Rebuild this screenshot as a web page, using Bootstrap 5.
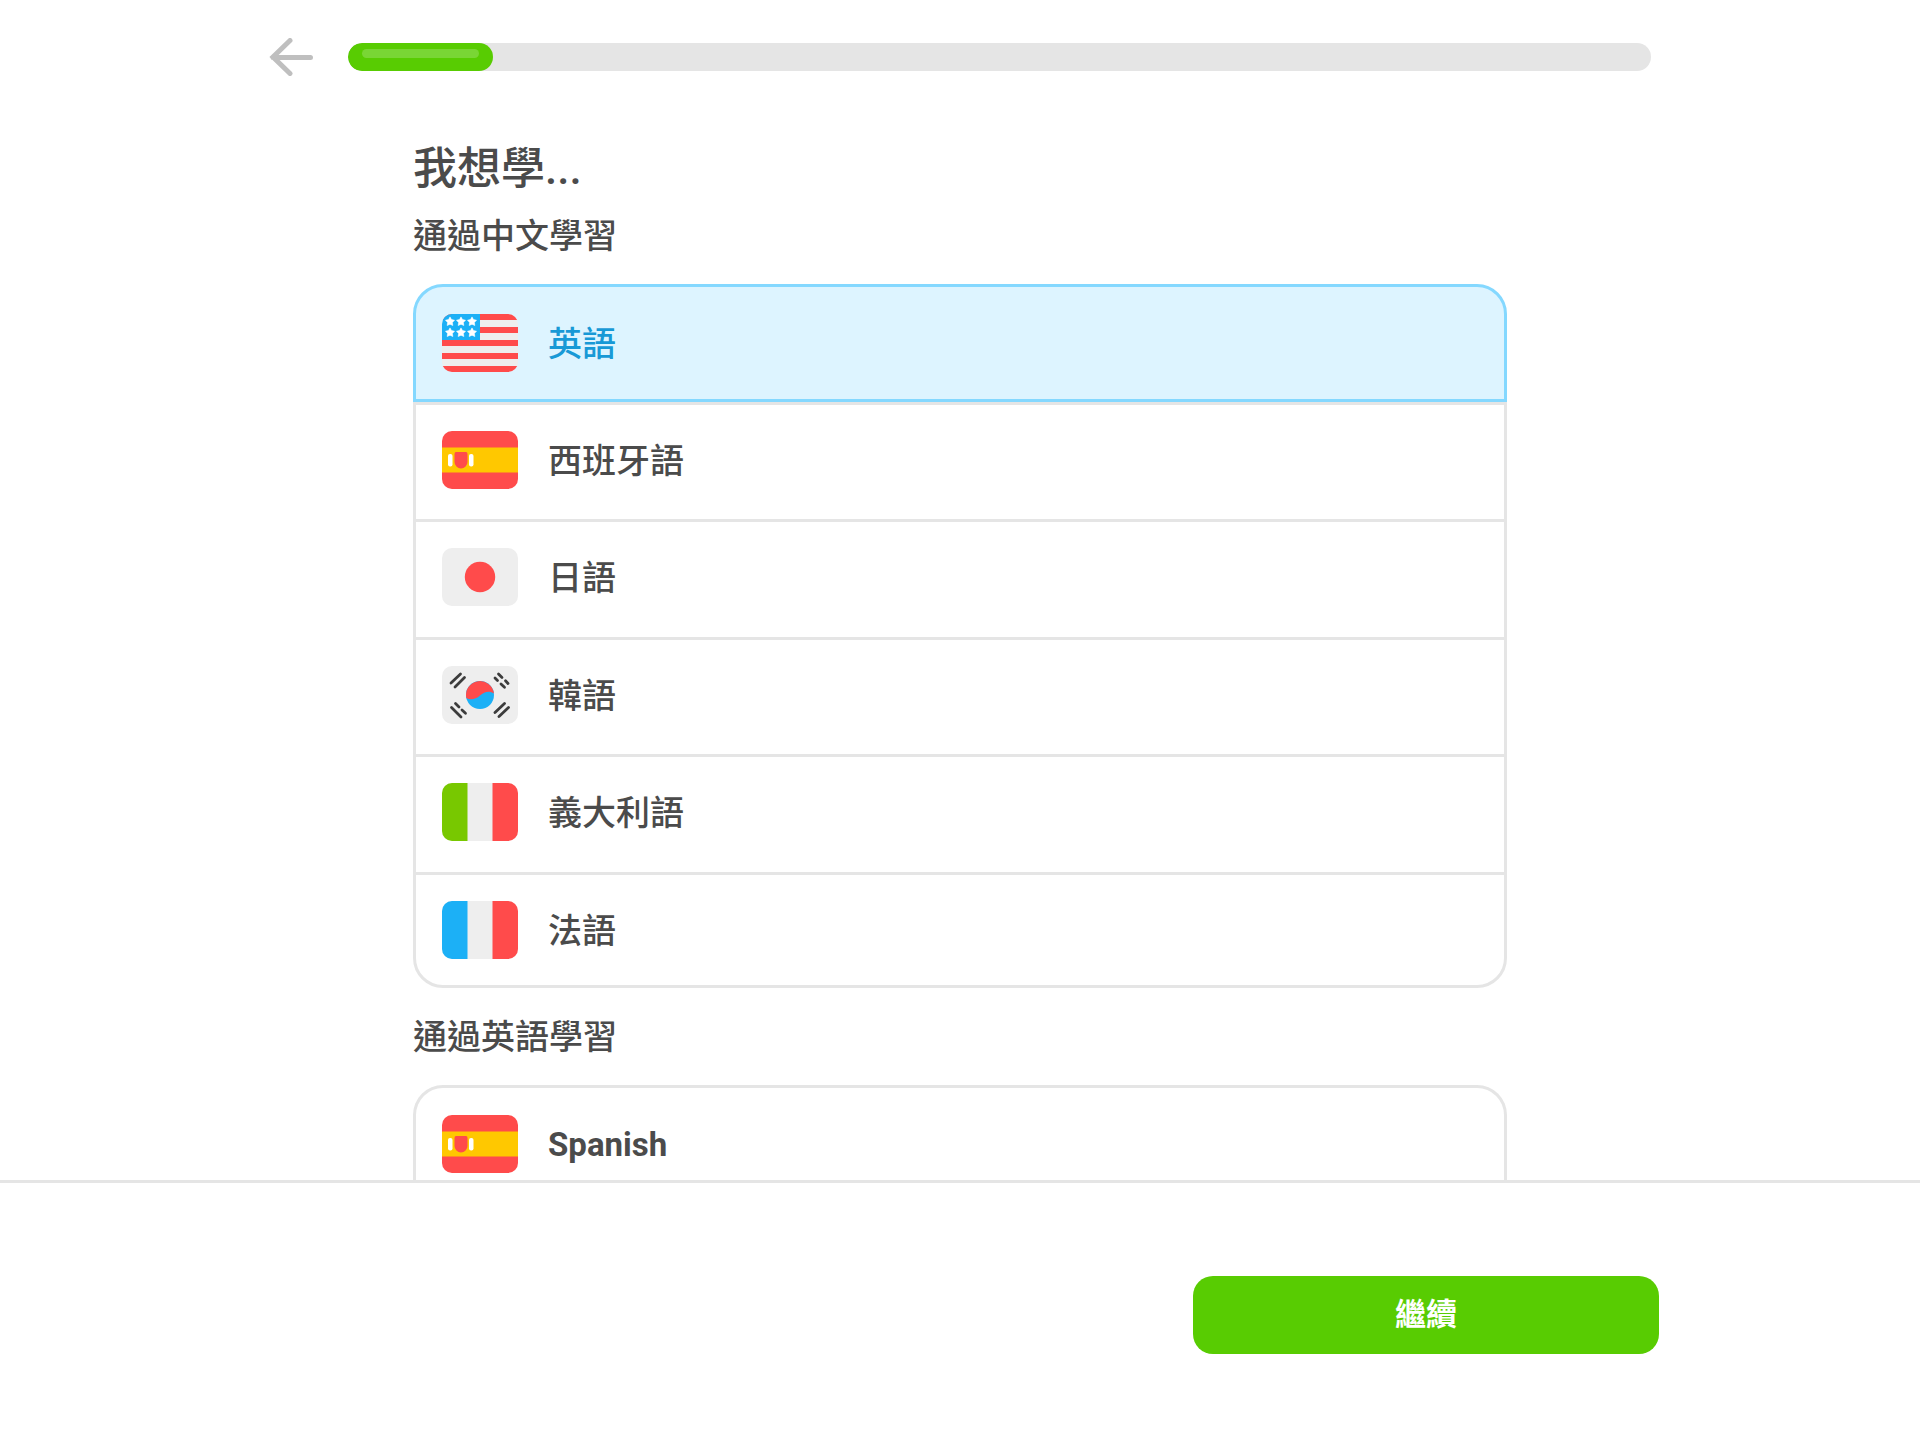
<!DOCTYPE html>
<html lang="zh-Hant">
<head>
<meta charset="utf-8">
<meta name="viewport" content="width=device-width, initial-scale=1">
<title>我想學...</title>
<link href="https://cdn.jsdelivr.net/npm/bootstrap@5.3.0/dist/css/bootstrap.min.css" rel="stylesheet">
<style>
  :root { --line: #e5e5e5; --ink: #4b4b4b; --green: #58cc02; }
  body { font-family: Roboto, "Noto Sans CJK TC", sans-serif; color: var(--ink); background: #fff; }
  .top-wrap { max-width: 1382px; padding-top: 38px; gap: 34px; }
  .back-link { line-height: 0; color: #bfbfbf; }
  .lesson-progress { height: 28px; border-radius: 14px; background: var(--line); }
  .lesson-progress .progress-bar { background: var(--green); border-radius: 14px; padding: 6px 14px 13px; }
  .shine { height: 9px; border-radius: 5px; background: #79d635; }
  .course-scroll { min-height: 0; overflow-y: auto; scrollbar-width: none; }
  .course-scroll::-webkit-scrollbar { display: none; }
  .course-wrap { max-width: 1094px; padding-top: 63px; }
  .page-title { font-size: 44px; line-height: 60px; font-weight: 500; margin-bottom: 15px; }
  .group-title { font-size: 34px; line-height: 44px; font-weight: 500; margin-bottom: 26px; }
  .course-list { margin-bottom: 27px; }
  .course-row { height: 117px; padding: 26px; gap: 30px; border: 3px solid var(--line); border-bottom: 0; font-size: 34px; font-weight: 500; cursor: pointer; }
  .course-row svg { width: 76px; height: 58px; flex: none; border-radius: 10px; }
  .course-name { line-height: 60px; }
  .latin-name { font-size: 33px; font-weight: 700; }
  .course-list li:nth-child(odd) .course-row { height: 118px; }
  .course-list li:first-child .course-row { padding-top: 27px; border-radius: 30px 30px 0 0; }
  .course-list li:nth-child(n+2):last-child .course-row { height: 116px; border-bottom: 3px solid var(--line); border-radius: 0 0 30px 30px; }
  .btn-check:checked + .course-row { background: #ddf4ff; border: 3px solid #84d8ff; color: #1899d6; }
  .btn-check:focus-visible + .course-row { outline: 3px solid #1cb0f6; }
  .foot-bar { border-top: 3px solid var(--line); padding: 93px 0 86px; }
  .foot-wrap { max-width: 1398px; }
  .btn-next { width: 466px; height: 78px; border-radius: 20px; background: var(--green); color: #fff; font-size: 31px; font-weight: 700; }
  .btn-next:hover { background: #61e002; color: #fff; }
</style>
<script src="https://cdn.jsdelivr.net/npm/bootstrap@5.3.0/dist/js/bootstrap.bundle.min.js"></script>
</head>
<body class="vh-100 d-flex flex-column overflow-hidden">

<svg class="d-none" aria-hidden="true">
  <defs>
    <path id="star" d="M0-4.6 1.5-1.9 4.5-1.3 2.4.9 2.8 4 0 2.7-2.8 4-2.4.9-4.5-1.3-1.5-1.9Z" fill="#fff" stroke="#fff" stroke-width=".6" stroke-linejoin="round"/>
    <symbol id="flag-us" viewBox="0 0 76 58">
      <path fill="#eee" d="M0 0h76v58H0z"/>
      <path fill="#ff4b4b" d="M0 0h76v6H0zM0 13h76v6H0zM0 26h76v6H0zM0 39h76v6H0zM0 52h76v6H0z"/>
      <path fill="#1cb0f6" d="M0 0h38v26H0z"/>
      <use href="#star" x="8" y="7.500"/><use href="#star" x="19" y="7.500"/><use href="#star" x="30" y="7.500"/>
      <use href="#star" x="8" y="18.500"/><use href="#star" x="19" y="18.500"/><use href="#star" x="30" y="18.500"/>
    </symbol>
    <symbol id="flag-es" viewBox="0 0 76 58">
      <path fill="#ff4b4b" d="M0 0h76v58H0z"/>
      <path fill="#ffc800" d="M0 16.500h76v25H0z"/>
      <rect x="6" y="23" width="4.500" height="12.500" rx="2" fill="#fff"/>
      <rect x="27" y="23" width="4.500" height="12.500" rx="2" fill="#fff"/>
      <path fill="#ff4b4b" d="M14 21h10q1.500 0 1.500 2v8a6.500 6.500 0 0 1-13 0v-8q0-2 1.500-2z"/>
    </symbol>
    <symbol id="flag-jp" viewBox="0 0 76 58">
      <rect width="76" height="58" fill="#eee"/>
      <circle cx="38" cy="29" r="15.200" fill="#ff4b4b"/>
    </symbol>
    <symbol id="flag-kr" viewBox="0 0 76 58">
      <rect width="76" height="58" fill="#eee"/>
      <circle cx="38" cy="29" r="14" fill="#1cb0f6"/>
      <path fill="#ff4b4b" d="M24.306 31.911C28.500 34.500 33.500 33.500 38 29.500S47.500 24.500 51.923 27.537A14 14 0 1 0 24.306 31.911Z"/>
      <g stroke="#3c3c3c" stroke-width="2.800" stroke-linecap="round">
        <path d="M9 17 18.500 8M13 21 22.500 11.500"/>
        <path d="M53 46.500 62.500 37.500M57 50.500 66.500 41.500"/>
        <path d="M53 12 55.500 14.500M59 18 62.500 21.200M56.500 8 60 11.500M63.500 14.800 66 17.500"/>
        <path d="M9.500 41.500 19 51M13.500 37.500 17 41M20 44 23.500 47.200"/>
      </g>
    </symbol>
    <symbol id="flag-it" viewBox="0 0 76 58">
      <path fill="#eee" d="M0 0h76v58H0z"/><path fill="#78c800" d="M0 0h25.500v58H0z"/><path fill="#ff4b4b" d="M50.500 0H76v58H50.500z"/>
    </symbol>
    <symbol id="flag-fr" viewBox="0 0 76 58">
      <path fill="#eee" d="M0 0h76v58H0z"/><path fill="#1cb0f6" d="M0 0h25.500v58H0z"/><path fill="#ff4b4b" d="M50.500 0H76v58H50.500z"/>
    </symbol>
  </defs>
</svg>

<header class="top-wrap w-100 mx-auto d-flex align-items-center">
  <a class="back-link" href="#" aria-label="返回">
    <svg width="45" height="38" viewBox="0 0 45 38" fill="none" stroke="currentColor" stroke-width="5" stroke-linecap="round" stroke-linejoin="miter"><path d="M21 2.500 4 19 21 35.500M4 19.500H41.500"/></svg>
  </a>
  <div class="progress lesson-progress flex-grow-1" role="progressbar" aria-label="進度" aria-valuenow="11" aria-valuemin="0" aria-valuemax="100">
    <div class="progress-bar" style="width: 11.1%"><div class="shine"></div></div>
  </div>
</header>

<main class="course-scroll flex-grow-1">
  <div class="course-wrap mx-auto">
    <h1 class="page-title">我想學...</h1>
    <h2 class="group-title">通過中文學習</h2>
    <ul class="course-list list-unstyled">
      <li class="position-relative">
        <input class="btn-check" type="radio" name="course" id="c-en" checked>
        <label class="course-row d-flex" for="c-en"><svg aria-hidden="true"><use href="#flag-us"/></svg><span class="course-name">英語</span></label>
      </li>
      <li class="position-relative">
        <input class="btn-check" type="radio" name="course" id="c-es">
        <label class="course-row d-flex" for="c-es"><svg aria-hidden="true"><use href="#flag-es"/></svg><span class="course-name">西班牙語</span></label>
      </li>
      <li class="position-relative">
        <input class="btn-check" type="radio" name="course" id="c-ja">
        <label class="course-row d-flex" for="c-ja"><svg aria-hidden="true"><use href="#flag-jp"/></svg><span class="course-name">日語</span></label>
      </li>
      <li class="position-relative">
        <input class="btn-check" type="radio" name="course" id="c-ko">
        <label class="course-row d-flex" for="c-ko"><svg aria-hidden="true"><use href="#flag-kr"/></svg><span class="course-name">韓語</span></label>
      </li>
      <li class="position-relative">
        <input class="btn-check" type="radio" name="course" id="c-it">
        <label class="course-row d-flex" for="c-it"><svg aria-hidden="true"><use href="#flag-it"/></svg><span class="course-name">義大利語</span></label>
      </li>
      <li class="position-relative">
        <input class="btn-check" type="radio" name="course" id="c-fr">
        <label class="course-row d-flex" for="c-fr"><svg aria-hidden="true"><use href="#flag-fr"/></svg><span class="course-name">法語</span></label>
      </li>
    </ul>
    <h2 class="group-title">通過英語學習</h2>
    <ul class="course-list list-unstyled mb-0">
      <li class="position-relative">
        <input class="btn-check" type="radio" name="course" id="c-es-en">
        <label class="course-row d-flex" for="c-es-en"><svg aria-hidden="true"><use href="#flag-es"/></svg><span class="course-name latin-name" lang="en">Spanish</span></label>
      </li>
    </ul>
  </div>
</main>

<footer class="foot-bar flex-shrink-0">
  <div class="foot-wrap mx-auto d-flex justify-content-end">
    <button class="btn btn-next border-0 p-0" type="button">繼續</button>
  </div>
</footer>
</body>
</html>
